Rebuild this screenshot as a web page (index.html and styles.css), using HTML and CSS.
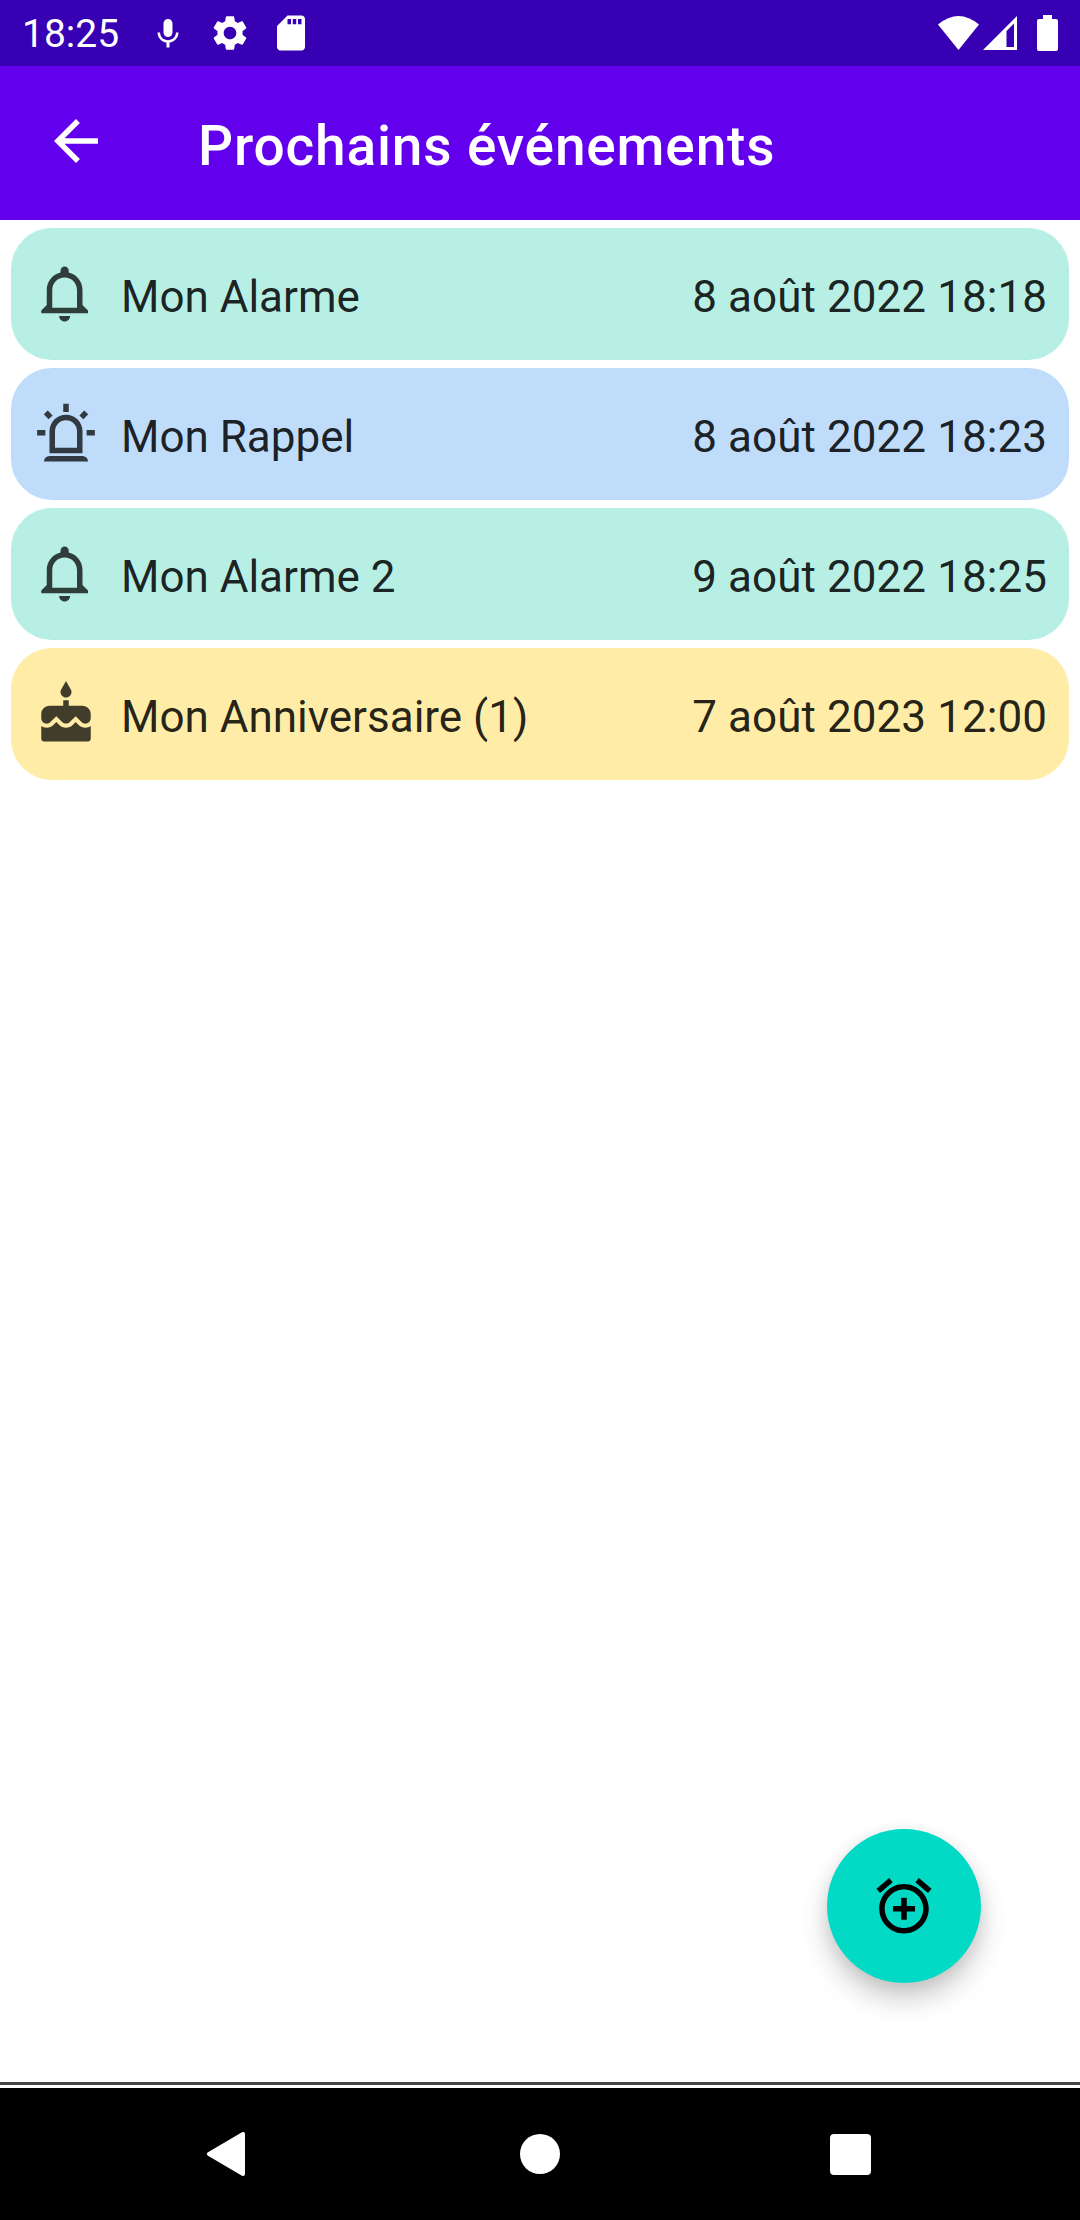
FILE: index.html
```html
<!DOCTYPE html>
<html lang="fr">
<head>
    <meta charset="UTF-8">
    <meta name="viewport" content="width=device-width, initial-scale=1.0">
    <title>Prochains événements</title>
    <link rel="stylesheet" href="styles.css">
</head>
<body>
    <div class="status-bar">
        <span class="clock">18:25</span>
        <svg class="status-mic" viewBox="0 0 24 24"><path d="M12 14c1.66 0 2.99-1.34 2.99-3L15 5c0-1.66-1.34-3-3-3S9 3.34 9 5v6c0 1.66 1.34 3 3 3zm5.3-3c0 3-2.54 5.1-5.3 5.1S6.7 14 6.7 11H5c0 3.41 2.72 6.23 6 6.72V21h2v-3.28c3.28-.48 6-3.3 6-6.72h-1.7z"/></svg>
        <svg class="status-gear" viewBox="0 0 24 24"><path d="M19.14 12.94c.04-.3.06-.61.06-.94 0-.32-.02-.64-.07-.94l2.03-1.58c.18-.14.23-.41.12-.61l-1.92-3.32c-.12-.22-.37-.29-.59-.22l-2.39.96c-.5-.38-1.03-.7-1.62-.94l-.36-2.54c-.04-.24-.24-.41-.48-.41h-3.84c-.24 0-.43.17-.47.41l-.36 2.54c-.59.24-1.13.57-1.62.94l-2.39-.96c-.22-.08-.47 0-.59.22L2.74 8.87c-.12.21-.08.47.12.61l2.03 1.58c-.05.3-.09.63-.09.94s.02.64.07.94l-2.03 1.58c-.18.14-.23.41-.12.61l1.92 3.32c.12.22.37.29.59.22l2.39-.96c.5.38 1.03.7 1.62.94l.36 2.54c.05.24.24.41.48.41h3.84c.24 0 .44-.17.47-.41l.36-2.54c.59-.24 1.13-.56 1.62-.94l2.39.96c.22.08.47 0 .59-.22l1.92-3.32c.12-.22.07-.47-.12-.61l-2.01-1.58zM12 15.6c-1.98 0-3.6-1.62-3.6-3.6s1.62-3.6 3.6-3.6 3.6 1.62 3.6 3.6-1.62 3.6-3.6 3.6z"/></svg>
        <svg class="status-card" viewBox="0 0 24 24"><path d="M18 2h-8L4.02 8 4 20c0 1.1.9 2 2 2h12c1.1 0 2-.9 2-2V4c0-1.1-.9-2-2-2zm-6 5h-2V4h2v3zm3 0h-2V4h2v3zm3 0h-2V4h2v3z"/></svg>
        <span class="spacer"></span>
        <svg class="status-wifi" viewBox="0 0 41 34"><path d="M0 8.5Q20.500-8.5 41 8.5L20.500 34z"/></svg>
        <svg class="status-signal" viewBox="0 0 34 34"><path fill-rule="evenodd" d="M34 0V34H0zM31 7.5L23.500 15V31H31z"/></svg>
        <svg class="status-battery" viewBox="0 0 21 36"><path d="M6 0h9v4h4q2 0 2 2v28q0 2-2 2H2q-2 0-2-2V6q0-2 2-2h4z"/></svg>
    </div>
    <header class="app-bar">
        <svg class="back" viewBox="0 0 24 24"><path d="M20 11H7.83l5.59-5.59L12 4l-8 8 8 8 1.41-1.41L7.83 13H20v-2z"/></svg>
        <h1>Prochains événements</h1>
    </header>

    <main class="events">
        <div class="event alarm">
            <svg class="icon" viewBox="0 0 24 24"><path d="M11.5 22c1.1 0 2-.9 2-2h-4c0 1.1.9 2 2 2zM18 16v-5.5c0-3.07-2.13-5.64-5-6.32V3.5c0-.83-.67-1.5-1.5-1.5S10 2.67 10 3.5v.68c-2.87.68-5 3.25-5 6.32V16l-2 2v1h17v-1l-2-2zM16 17H7v-6.5C7 8.01 9.01 6 11.5 6S16 8.01 16 10.5V17z"/></svg>
            <span class="name">Mon Alarme</span>
            <span class="date">8 août 2022 18:18</span>
        </div>
        <div class="event reminder">
            <svg class="icon" viewBox="0 0 24 24">
                <path d="M12 5a6 6 0 0 0-6 6v8h12v-8a6 6 0 0 0-6-6zM16 17H8v-6a4 4 0 0 1 8 0zM6 20h12a2 2 0 0 1 2 2H4a2 2 0 0 1 2-2zM11 1h2v3h-2zM1.500 10.5h3v2h-3zM19.500 10.5h3v2h-3z"/>
                <path class="ray" d="M4.650 4.100l1.750 1.850M19.350 4.100l-1.750 1.850"/>
            </svg>
            <span class="name">Mon Rappel</span>
            <span class="date">8 août 2022 18:23</span>
        </div>
        <div class="event alarm">
            <svg class="icon" viewBox="0 0 24 24"><path d="M11.5 22c1.1 0 2-.9 2-2h-4c0 1.1.9 2 2 2zM18 16v-5.5c0-3.07-2.13-5.64-5-6.32V3.5c0-.83-.67-1.5-1.5-1.5S10 2.67 10 3.5v.68c-2.87.68-5 3.25-5 6.32V16l-2 2v1h17v-1l-2-2zM16 17H7v-6.5C7 8.01 9.01 6 11.5 6S16 8.01 16 10.5V17z"/></svg>
            <span class="name">Mon Alarme 2</span>
            <span class="date">9 août 2022 18:25</span>
        </div>
        <div class="event birthday">
            <svg class="icon" viewBox="0 0 24 24"><path d="M12 6c1.11 0 2-.9 2-2 0-.38-.1-.73-.29-1.03L12 0l-1.71 2.97c-.19.3-.29.65-.29 1.03 0 1.1.9 2 2 2zm4.6 9.99l-1.07-1.07-1.08 1.07c-1.3 1.3-3.58 1.31-4.89 0l-1.07-1.07-1.09 1.07C6.75 16.64 5.88 17 4.96 17c-.73 0-1.4-.23-1.96-.61V21c0 .55.45 1 1 1h16c.55 0 1-.45 1-1v-4.61c-.56.38-1.23.61-1.96.61-.92 0-1.79-.36-2.44-1.01zM18 9h-5V7h-2v2H6c-1.66 0-3 1.34-3 3v1.54c0 1.08.88 1.96 1.96 1.96.52 0 1.02-.2 1.38-.57l2.14-2.13 2.13 2.13c.74.74 2.03.74 2.77 0l2.14-2.13 2.13 2.13c.37.37.86.57 1.38.57 1.08 0 1.96-.88 1.96-1.96V12c0-1.66-1.34-3-3-3z"/></svg>
            <span class="name">Mon Anniversaire (1)</span>
            <span class="date">7 août 2023 12:00</span>
        </div>
    </main>

    <button class="fab" type="button" aria-label="Ajouter">
        <svg viewBox="0 0 24 24"><path d="M7.88 3.39L6.6 1.86 2 5.71l1.29 1.53 4.59-3.85zM22 5.72l-4.6-3.86-1.29 1.53 4.6 3.86L22 5.72zM12 4c-4.97 0-9 4.03-9 9s4.02 9 9 9c4.97 0 9-4.03 9-9s-4.03-9-9-9zm0 16c-3.87 0-7-3.13-7-7s3.13-7 7-7 7 3.13 7 7-3.13 7-7 7zm1-11h-2v3H8v2h3v3h2v-3h3v-2h-3V9z"/></svg>
    </button>

    <nav class="nav-bar">
        <svg viewBox="0 0 44 44"><path class="triangle" d="M3 22L37 2v40z"/></svg>
        <svg viewBox="0 0 44 44"><circle cx="22" cy="22" r="20"/></svg>
        <svg viewBox="0 0 44 44"><rect y="2" width="41" height="41" rx="4"/></svg>
    </nav>
</body>
</html>
```
FILE: styles.css
```css
* {
    box-sizing: border-box;
}
body {
    display: flex;
    flex-direction: column;
    height: 2220px;
    margin: 0;
    font-family: Roboto, sans-serif;
    background-color: #ffffff;
    color: #000000;
}
svg {
    display: block;
    flex-shrink: 0;
}
.status-bar {
    display: flex;
    align-items: center;
    height: 66px;
    padding: 0 22px;
    background-color: #3700b3;
    color: #ffffff;
    fill: #ffffff;
}
.clock {
    width: 128px;
    padding-top: 2px;
    font-size: 39px;
    line-height: 64px;
}
.status-mic {
    width: 36px;
    height: 36px;
    margin-top: 2px;
}
.status-gear {
    width: 42px;
    height: 42px;
    margin-left: 23px;
}
.status-card {
    width: 42px;
    height: 42px;
    margin-left: 19px;
}
.spacer {
    flex: 1;
}
.status-wifi {
    width: 41px;
    height: 34px;
    margin-right: 4px;
}
.status-signal {
    width: 34px;
    height: 34px;
    margin-right: 20px;
}
.status-battery {
    width: 21px;
    height: 36px;
}
.app-bar {
    display: flex;
    align-items: center;
    height: 154px;
    padding-left: 43px;
    background-color: #6200ee;
    color: #ffffff;
    fill: #ffffff;
}
.back {
    width: 66px;
    height: 66px;
    margin-bottom: 4px;
}
.app-bar h1 {
    margin: 5px 0 0 89px;
    font-size: 55px;
    font-weight: 500;
    letter-spacing: 0.83px;
}
.events {
    display: flex;
    flex: 1;
    flex-direction: column;
    gap: 8px;
    padding: 8px 11px;
}
.event {
    display: flex;
    align-items: center;
    height: 132px;
    padding: 0 22px;
    border-radius: 41px;
    font-size: 44px;
    color: rgba(0, 0, 0, 0.87);
}
.alarm {
    background-color: #b7efe5;
}
.reminder {
    background-color: #bfdcfa;
}
.birthday {
    background-color: #feeca7;
}
.icon {
    width: 66px;
    height: 66px;
    margin-right: 22px;
    fill: rgba(0, 0, 0, 0.74);
}
.ray {
    stroke: rgba(0, 0, 0, 0.74);
    stroke-width: 2;
}
.name {
    flex: 1;
    padding-top: 5px;
}
.date {
    padding-top: 5px;
    letter-spacing: 0.06px;
}
.fab {
    position: absolute;
    top: 1829px;
    left: 827px;
    display: flex;
    align-items: center;
    justify-content: center;
    width: 154px;
    height: 154px;
    padding: 0;
    border: none;
    border-radius: 50%;
    background-color: #03dac5;
    box-shadow: 0 16px 28px rgba(0, 0, 0, 0.2), 0 4px 16px rgba(0, 0, 0, 0.08);
}
.fab svg {
    width: 66px;
    height: 66px;
}
.nav-bar {
    display: flex;
    align-items: center;
    justify-content: center;
    gap: 268px;
    height: 138px;
    padding-top: 3px;
    border-top: 3px solid #464646;
    background-color: #000000;
    box-shadow: inset 0 3px #ffffff;
    fill: #ffffff;
}
.nav-bar svg {
    width: 44px;
    height: 44px;
}
.triangle {
    stroke: #ffffff;
    stroke-width: 4;
    stroke-linejoin: round;
}
```
